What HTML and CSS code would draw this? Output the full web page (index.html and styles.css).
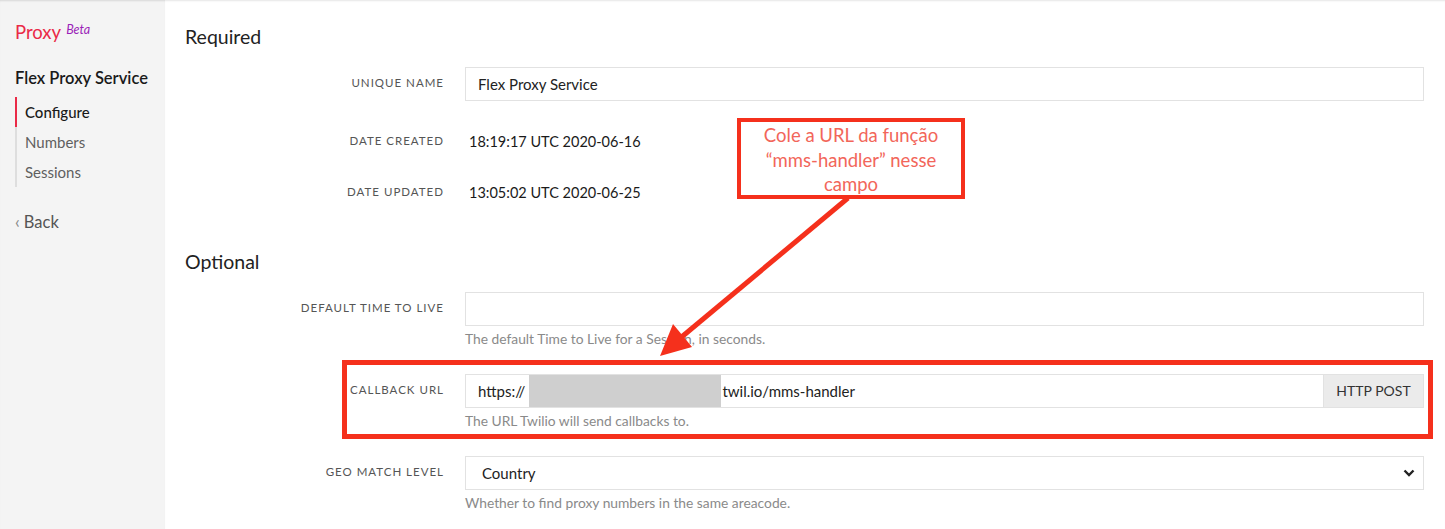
FILE: index.html
```html
<!DOCTYPE html>
<html lang="pt">
<head>
<meta charset="utf-8">
<title>Proxy - Flex Proxy Service</title>
<link rel="stylesheet" href="styles.css">
</head>
<body>
<div class="app">
  <aside class="sidebar">
    <div class="brand"><span class="brand-name">Proxy</span><span class="brand-beta">Beta</span></div>
    <div class="service-name">Flex Proxy Service</div>
    <nav class="nav">
      <a class="nav-item active">Configure</a>
      <a class="nav-item">Numbers</a>
      <a class="nav-item">Sessions</a>
    </nav>
    <a class="back"><span class="back-chev">&lsaquo;</span>Back</a>
  </aside>
  <main class="main">
    <h2 class="section-title">Required</h2>
    <div class="field field-first">
      <label class="label">Unique Name</label>
      <div class="control"><div class="input">Flex Proxy Service</div></div>
    </div>
    <div class="field field-static">
      <label class="label">Date Created</label>
      <div class="control"><div class="value">18:19:17 UTC 2020-06-16</div></div>
    </div>
    <div class="field field-static">
      <label class="label">Date Updated</label>
      <div class="control"><div class="value">13:05:02 UTC 2020-06-25</div></div>
    </div>

    <h2 class="section-title section-optional">Optional</h2>
    <div class="field">
      <label class="label">Default Time to Live</label>
      <div class="control">
        <div class="input"></div>
        <div class="help">The default Time to Live for a Session, in seconds.</div>
      </div>
    </div>
    <div class="field">
      <label class="label">Callback URL</label>
      <div class="control">
        <div class="input-group">
          <div class="input input-flex">https://<span class="redact"></span>twil.io/mms-handler</div>
          <div class="addon">HTTP POST</div>
        </div>
        <div class="help">The URL Twilio will send callbacks to.</div>
      </div>
    </div>
    <div class="field">
      <label class="label">Geo Match Level</label>
      <div class="control">
        <div class="input select"><span class="select-text">Country</span>
          <svg class="chev" width="12" height="8" viewBox="0 0 12 8"><path d="M1.5 1.5 L6 6 L10.5 1.5" fill="none" stroke="#222" stroke-width="2.4"/></svg>
        </div>
        <div class="help">Whether to find proxy numbers in the same areacode.</div>
      </div>
    </div>
  </main>
</div>

<div class="callout">Cole a URL da função “mms-handler” nesse campo</div>
<div class="highlight"></div>
<svg class="arrow" width="1445" height="529" viewBox="0 0 1445 529">
  <line x1="848" y1="198" x2="678" y2="340" stroke="#f5301c" stroke-width="5"/>
  <polygon points="660,356 692,347 673,324" fill="#f5301c"/>
</svg>
</body>
</html>
```

FILE: styles.css
```css
html, body {
  margin: 0;
  padding: 0;
  background: #fff;
  font-family: Lato, "Open Sans", sans-serif;
  color: #222;
}

.app {
  display: flex;
  min-height: 529px;
}

.sidebar {
  width: 165px;
  flex: none;
  background: #f4f4f4;
  box-shadow: inset 0 2px 2px -1px rgba(0,0,0,0.12);
  padding: 18px 0 0 15px;
  box-sizing: border-box;
}

.brand {
  line-height: 24px;
  height: 24px;
}
.brand-name {
  font-size: 18.5px;
  color: #ea2a47;
}
.brand-beta {
  font-size: 12.5px;
  font-style: italic;
  color: #9b1fb8;
  margin-left: 5px;
  vertical-align: 5px;
}

.service-name {
  margin-top: 24px;
  font-size: 16.5px;
  font-weight: 600;
  line-height: 24px;
  color: #1a1a1a;
}

.nav {
  display: flex;
  flex-direction: column;
  margin-top: 7px;
  border-left: 2px solid #dedede;
}
.nav-item {
  display: block;
  height: 30px;
  line-height: 30px;
  padding-left: 8px;
  font-size: 15px;
  color: #5f5f5f;
  margin-left: -2px;
  border-left: 2px solid transparent;
}
.nav-item.active {
  border-left-color: #ea2a47;
  color: #1a1a1a;
  font-weight: 500;
}

.back {
  display: block;
  margin-top: 23px;
  font-size: 16.5px;
  line-height: 24px;
  color: #555;
}
.back-chev {
  font-size: 17px;
  color: #888;
  margin-right: 4px;
}

.main {
  flex: 1;
  padding: 25px 21px 0 20px;
  box-shadow: inset 0 2px 2px -1px rgba(0,0,0,0.10);
}

.section-title {
  margin: 0 0 18px 0;
  font-size: 19.5px;
  font-weight: 400;
  line-height: 24px;
  color: #222;
}
.section-optional {
  margin-top: 40px;
}

.field {
  display: grid;
  grid-template-columns: 259px 1fr;
  column-gap: 21px;
  margin-bottom: 26px;
}
.field-first {
  margin-bottom: 24px;
}
.field-static {
  margin-bottom: 17px;
}
.field:last-child {
  margin-bottom: 0;
}

.label {
  text-align: right;
  text-transform: uppercase;
  font-size: 11.5px;
  letter-spacing: 1px;
  color: #555;
  line-height: 32px;
}

.input {
  height: 34px;
  box-sizing: border-box;
  border: 1px solid #e2e2e2;
  background: #fff;
  padding-left: 12px;
  font-size: 15px;
  line-height: 32px;
  color: #222;
  white-space: nowrap;
}

.value {
  font-size: 14.5px;
  line-height: 34px;
  color: #1a1a1a;
  padding-left: 4px;
}

.help {
  margin-top: 4px;
  font-size: 13.8px;
  line-height: 18px;
  color: #8a8a8a;
}

.input-group {
  display: flex;
  height: 34px;
}
.input-flex {
  flex: 1;
  display: flex;
  align-items: center;
  border-right: none;
}
.redact {
  display: inline-block;
  width: 192px;
  height: 32px;
  background: #cfcfcf;
  margin-left: 4px;
  margin-right: 1px;
}
.addon {
  width: 101px;
  box-sizing: border-box;
  border: 1px solid #e2e2e2;
  background: #ebebeb;
  font-size: 14px;
  line-height: 32px;
  text-align: center;
  color: #333;
}

.select {
  display: flex;
  align-items: center;
  justify-content: space-between;
  padding-left: 16px;
  padding-right: 8px;
}
.chev {
  display: block;
}

.callout {
  position: absolute;
  left: 737px;
  top: 118px;
  width: 228px;
  height: 81px;
  box-sizing: border-box;
  border: 4px solid #f5301c;
  padding: 1px 6px 0;
  text-align: center;
  font-size: 18.5px;
  line-height: 24.5px;
  color: #f2665a;
}

.highlight {
  position: absolute;
  left: 342px;
  top: 360px;
  width: 1091px;
  height: 79px;
  box-sizing: border-box;
  border: 5px solid #f5301c;
}

.arrow {
  position: absolute;
  left: 0;
  top: 0;
  pointer-events: none;
}
```
